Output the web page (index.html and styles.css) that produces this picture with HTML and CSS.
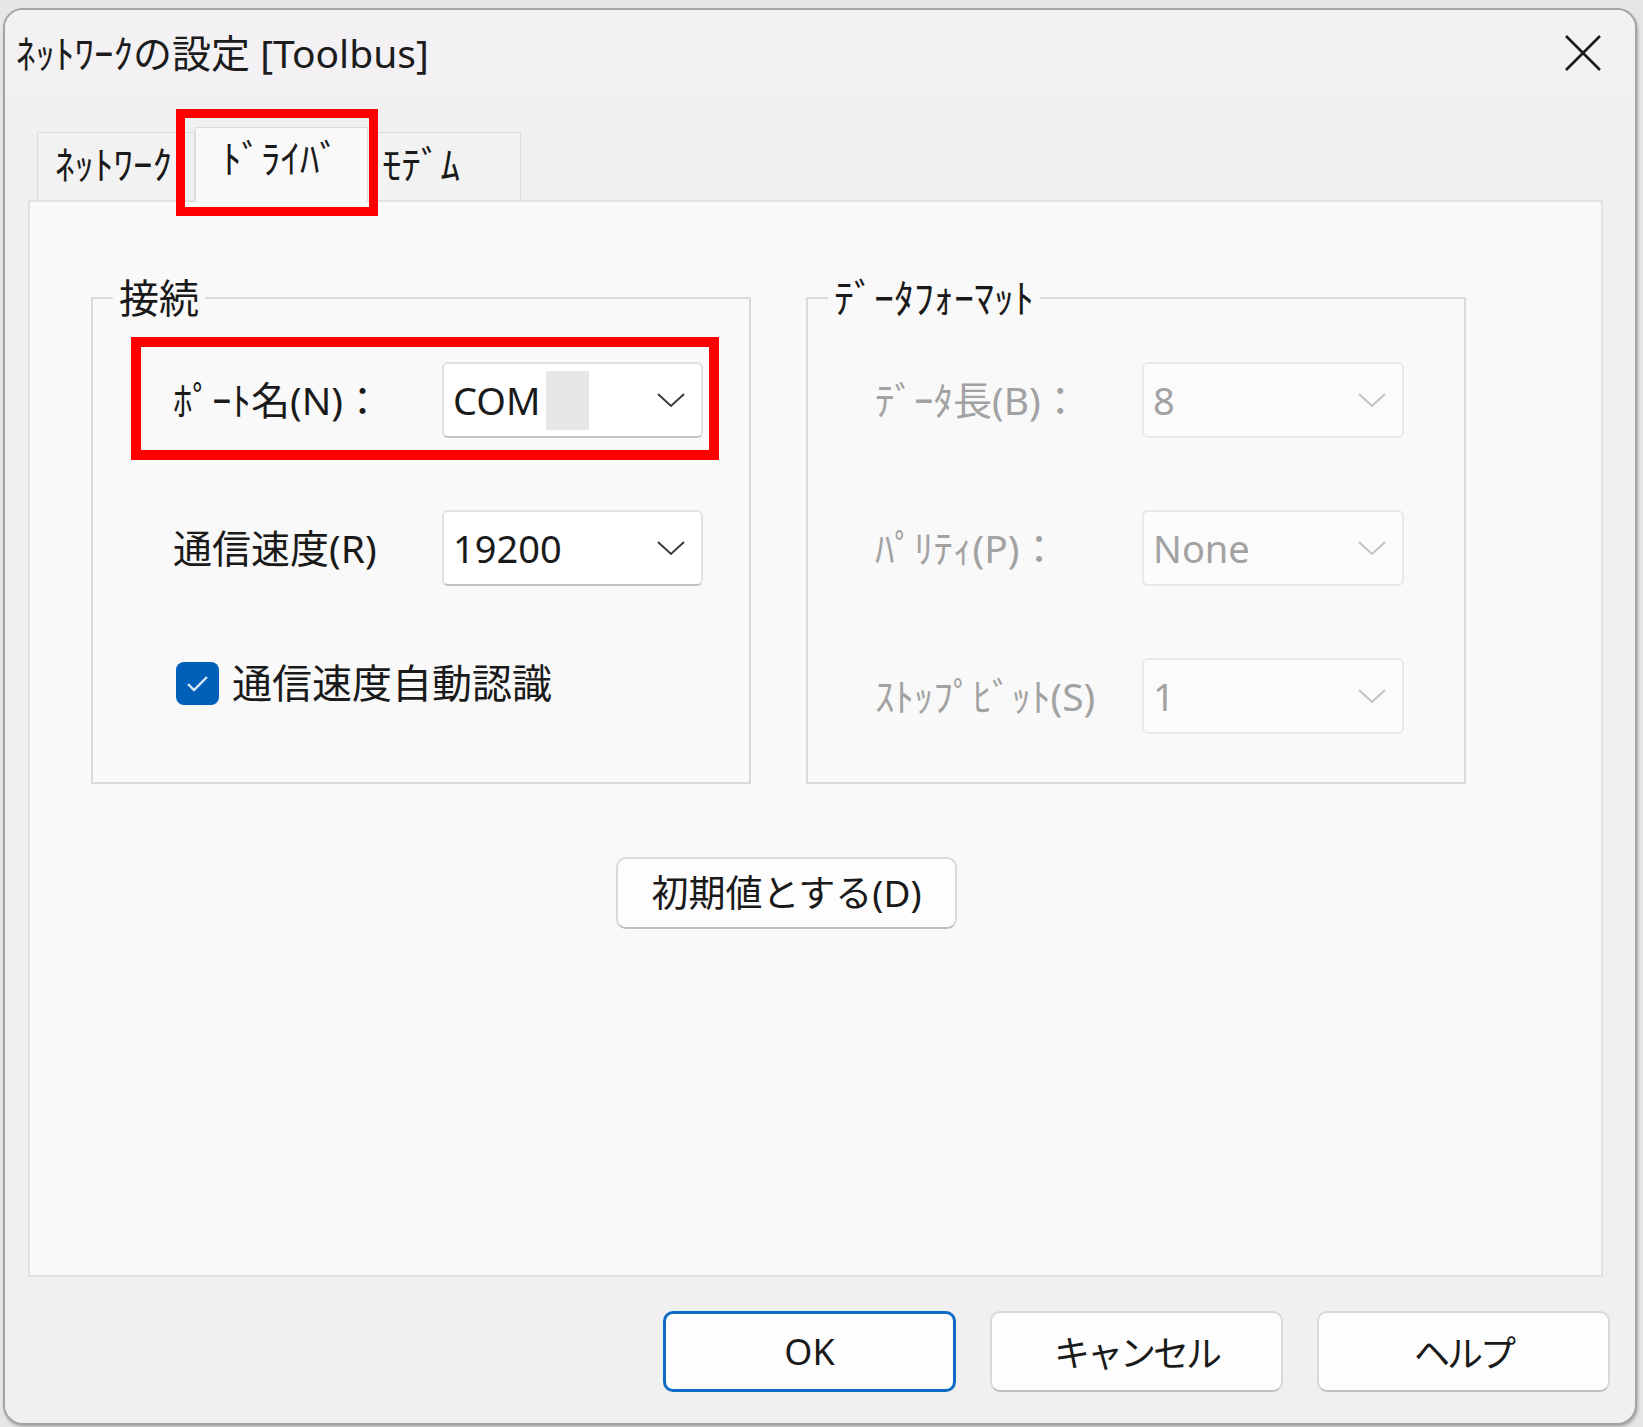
FILE: index.html
```html
<!DOCTYPE html>
<html lang="ja">
<head>
    <meta charset="UTF-8">
    <title>ﾈｯﾄﾜｰｸの設定 [Toolbus]</title>
    <link rel="stylesheet" href="styles.css">
</head>
<body>
<div class="window">
    <div class="titlebar">
        <span class="title">ﾈｯﾄﾜｰｸの設定 [Toolbus]</span>
        <svg class="close" width="38" height="38" viewBox="0 0 38 38">
            <path d="M2 2 L36 36 M36 2 L2 36" stroke="#1b1b1b" stroke-width="2.6" fill="none"/>
        </svg>
    </div>

    <div class="tabs">
        <div class="tab first">ﾈｯﾄﾜｰｸ</div>
        <div class="tab active">ﾄﾞﾗｲﾊﾞ<span class="callout"></span></div>
        <div class="tab last">ﾓﾃﾞﾑ</div>
    </div>

    <div class="panel">
        <div class="groups">
            <fieldset class="group">
                <legend>接続</legend>
                <div class="row marked">
                    <span class="label">ﾎﾟｰﾄ名(N)：</span>
                    <div class="combo">
                        <span class="value">COM<span class="redact"></span></span>
                        <svg class="chevron" width="28" height="16" viewBox="0 0 28 16"><polyline points="1,2 14,14 27,2" fill="none" stroke="#3a3a3a" stroke-width="2"/></svg>
                    </div>
                </div>
                <div class="row second">
                    <span class="label">通信速度(R)</span>
                    <div class="combo">
                        <span class="value">19200</span>
                        <svg class="chevron" width="28" height="16" viewBox="0 0 28 16"><polyline points="1,2 14,14 27,2" fill="none" stroke="#3a3a3a" stroke-width="2"/></svg>
                    </div>
                </div>
                <div class="check">
                    <span class="box">
                        <svg width="43" height="43" viewBox="0 0 43 43"><polyline points="12,22 18,28 31,15" fill="none" stroke="#dbe8f6" stroke-width="2.4"/></svg>
                    </span>
                    <span class="check-label">通信速度自動認識</span>
                </div>
            </fieldset>

            <fieldset class="group disabled">
                <legend>ﾃﾞｰﾀﾌｫｰﾏｯﾄ</legend>
                <div class="row">
                    <span class="label">ﾃﾞｰﾀ長(B)：</span>
                    <div class="combo">
                        <span class="value">8</span>
                        <svg class="chevron" width="28" height="16" viewBox="0 0 28 16"><polyline points="1,2 14,14 27,2" fill="none" stroke="#c2c2c2" stroke-width="2"/></svg>
                    </div>
                </div>
                <div class="row">
                    <span class="label">ﾊﾟﾘﾃｨ(P)：</span>
                    <div class="combo">
                        <span class="value">None</span>
                        <svg class="chevron" width="28" height="16" viewBox="0 0 28 16"><polyline points="1,2 14,14 27,2" fill="none" stroke="#c2c2c2" stroke-width="2"/></svg>
                    </div>
                </div>
                <div class="row">
                    <span class="label">ｽﾄｯﾌﾟﾋﾞｯﾄ(S)</span>
                    <div class="combo">
                        <span class="value">1</span>
                        <svg class="chevron" width="28" height="16" viewBox="0 0 28 16"><polyline points="1,2 14,14 27,2" fill="none" stroke="#c2c2c2" stroke-width="2"/></svg>
                    </div>
                </div>
            </fieldset>
        </div>

        <button class="btn reset">初期値とする(D)</button>
    </div>

    <div class="footer">
        <button class="btn action ok">OK</button>
        <button class="btn action">キャンセル</button>
        <button class="btn action">ヘルプ</button>
    </div>
</div>
</body>
</html>
```

FILE: styles.css
```css
body {
    margin: 0;
    background-color: #e6e6e6;
    font-family: "Noto Sans", "Noto Sans CJK JP", sans-serif;
    color: #1a1a1a;
}

/* dialog frame */
.window {
    box-sizing: border-box;
    width: 1634px;
    height: 1417px;
    margin: 8px 6px 2px 3px;
    border: 2px solid #a4a4a4;
    border-radius: 20px;
    overflow: hidden;
    background-color: #f0f0f0;
    display: flex;
    flex-direction: column;
    box-shadow: 1px 2px 3px rgba(0,0,0,0.25);
}

.titlebar {
    height: 86px;
    flex: none;
    display: flex;
    align-items: center;
    justify-content: space-between;
    padding: 0 33px 0 11px;
    background-color: #f4f1f4;
}

.title {
    font-size: 39px;
    line-height: 44px;
    color: #1c1c1c;
}

/* tabs */
.tabs {
    height: 104px;
    flex: none;
    display: flex;
    align-items: flex-end;
    padding-left: 32px;
}

.tab {
    box-sizing: border-box;
    height: 68px;
    border: 1px solid #dcdcdc;
    border-bottom: none;
    background-color: #f2f2f2;
    font-size: 39px;
    line-height: 62px;
    white-space: nowrap;
    overflow: hidden;
}

.tab.first {
    width: 158px;
    padding-left: 17px;
}

.tab.active {
    position: relative;
    z-index: 1;
    width: 173px;
    height: 75px;
    margin-bottom: -2px;
    padding-left: 26px;
    line-height: 60px;
    background-color: #f9f9f9;
    overflow: visible;
}

.tab.last {
    width: 153px;
    padding-left: 14px;
    border-left: none;
}

.callout {
    position: absolute;
    left: -20px;
    top: -19px;
    width: 202px;
    height: 107px;
    box-sizing: border-box;
    border: 9px solid #ff0000;
    z-index: 2;
}

/* page area */
.panel {
    flex: 1;
    margin: 0 32px 0 23px;
    padding: 74px 0 0 61px;
    border: 2px solid #e2e2e2;
    background-color: #f9f9f9;
}

.groups {
    display: flex;
    gap: 55px;
}

.group {
    width: 660px;
    box-sizing: border-box;
    margin: 0;
    padding: 0 0 48px 0;
    border: 2px solid #dadada;
    min-width: 0;
}

.group legend {
    margin-left: 20px;
    padding: 0 6px;
    font-size: 40px;
    line-height: 44px;
}

.row {
    display: grid;
    grid-template-columns: 269px 261px;
    align-items: center;
    padding-left: 80px;
}

.row .label {
    font-size: 39px;
    line-height: 44px;
    white-space: nowrap;
}

.row.marked {
    margin: 17px 30px 0 38px;
    border: 10px solid #ff0000;
    padding: 15px 5px 12px 32px;
}

.row.second {
    margin-top: 50px;
}

.combo {
    box-sizing: border-box;
    height: 76px;
    display: flex;
    align-items: center;
    justify-content: space-between;
    padding: 0 16px 0 9px;
    border: 2px solid #e1e1e1;
    border-bottom-color: #c4c4c4;
    border-radius: 6px;
    background-color: #ffffff;
}

.combo .value {
    display: flex;
    align-items: center;
    font-size: 38px;
    line-height: 44px;
}

.redact {
    display: inline-block;
    width: 43px;
    height: 59px;
    margin-left: 6px;
    background-color: #e7e7e7;
}

.check {
    display: flex;
    align-items: center;
    gap: 13px;
    margin-top: 75px;
    padding-left: 83px;
}

.check .box {
    width: 43px;
    height: 43px;
    border-radius: 8px;
    background-color: #005fb8;
}

.check .box svg {
    display: block;
}

.check-label {
    font-size: 40px;
    line-height: 44px;
}

/* right group is greyed out */
.group.disabled {
    color: #a2a2a2;
}

.group.disabled legend {
    color: #1a1a1a;
}

.group.disabled .row {
    grid-template-columns: 267px 262px;
    padding-left: 67px;
    margin-top: 72px;
}

.group.disabled .row:first-of-type {
    margin-top: 42px;
}

.group.disabled .combo {
    background-color: #fbfbfb;
    border-color: #e9e9e9;
}

/* buttons */
.btn {
    box-sizing: border-box;
    font-family: inherit;
    color: #1a1a1a;
    background-color: #fdfdfd;
    border: 2px solid #d9d9d9;
    border-bottom-color: #bfbfbf;
    border-radius: 10px;
    padding: 0;
}

.reset {
    display: block;
    width: 341px;
    height: 72px;
    margin: 73px 0 0 525px;
    font-size: 37px;
    line-height: 44px;
}

.footer {
    flex: none;
    display: flex;
    justify-content: flex-end;
    gap: 34px;
    padding: 34px 25px 31px 0;
}

.action {
    width: 293px;
    height: 81px;
    font-size: 36px;
    letter-spacing: -3px;
}

.ok {
    border: 3px solid #0f6cc4;
    letter-spacing: 0;
}
```
